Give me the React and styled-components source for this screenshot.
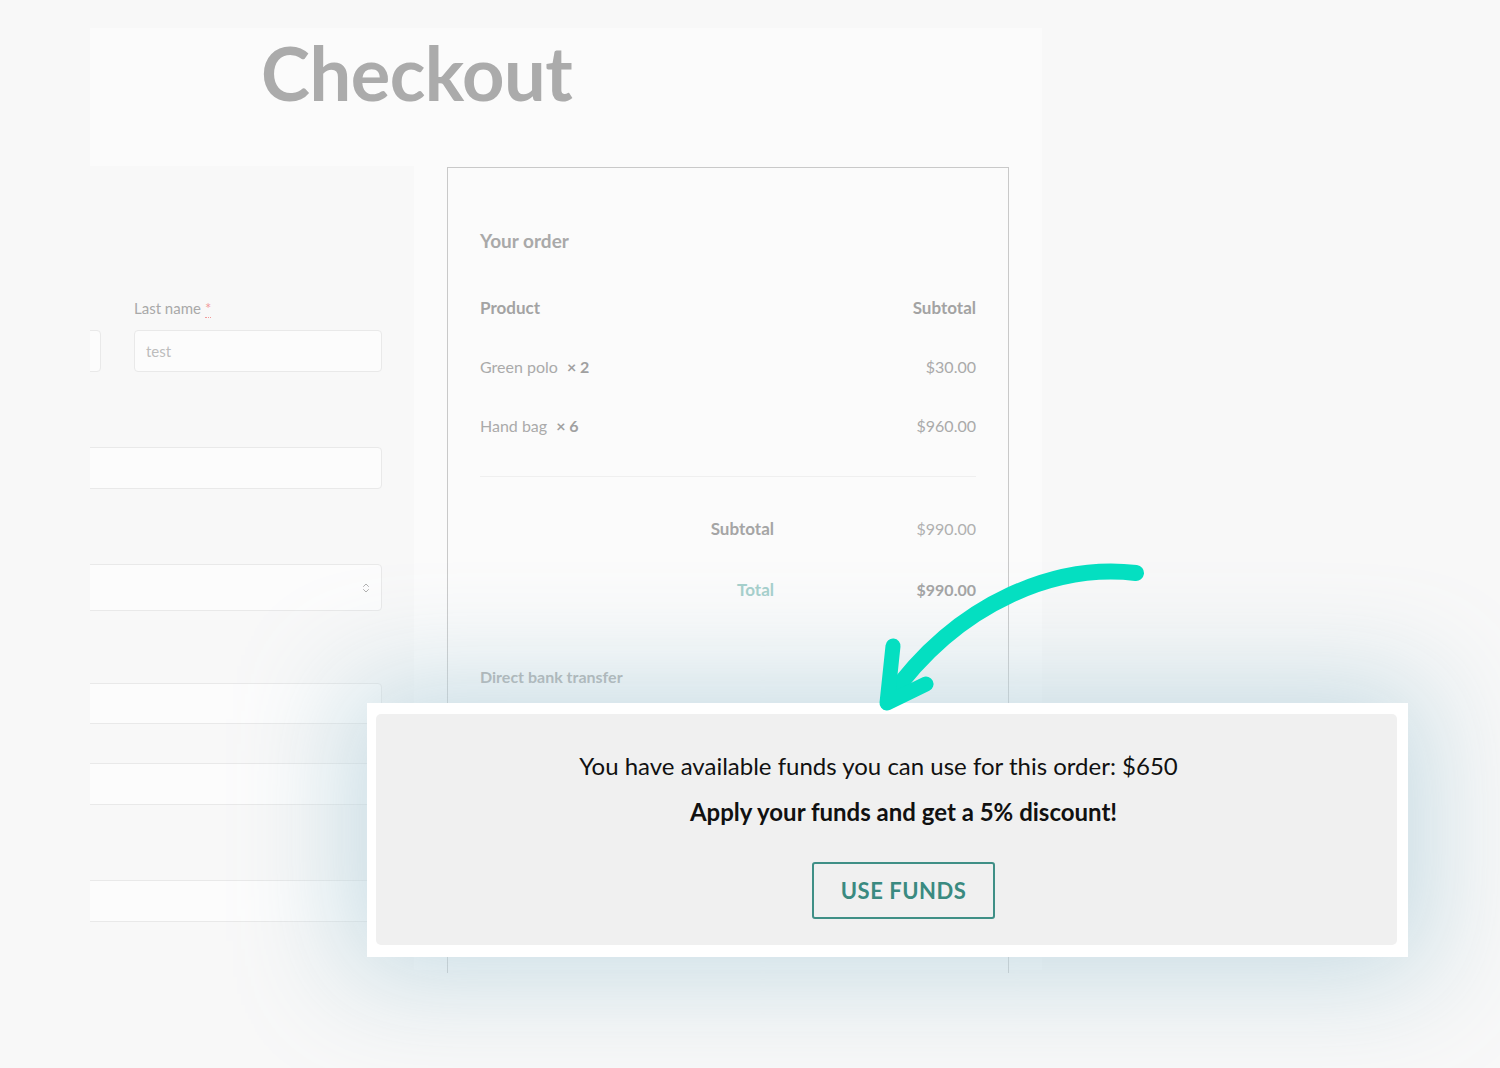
import styled, { createGlobalStyle } from "styled-components";
import { ChevronsUpDown } from "lucide-react";

const GlobalStyle = createGlobalStyle`
  * { box-sizing: border-box; }
  body {
    margin: 0;
    background: #f8f8f8;
    font-family: "Lato", "Open Sans", sans-serif;
  }
`;

const Page = styled.div`
  position: relative;
  width: 1500px;
  height: 1068px;
  overflow: hidden;
  padding: 28px 0 0 90px;
  background: #f8f8f8;
`;

const Panel = styled.div`
  width: 952px;
  height: 942px;
  background: #fbfbfb;
  display: flex;
  flex-direction: column;
`;

const Header = styled.div`
  flex-shrink: 0;
  height: 138px;
  padding: 5px 0 0 171px;
`;

const Title = styled.h1`
  margin: 0;
  font-size: 74px;
  line-height: 80px;
  font-weight: 700;
  color: #ababab;
  letter-spacing: -0.5px;
`;

const Body = styled.div`
  flex: 1;
  min-height: 0;
  display: flex;
  gap: 33px;
  align-items: flex-start;
`;

const LeftCol = styled.div`
  width: 324px;
  height: 100%;
  background: #f8f8f8;
  overflow: hidden;
`;

const Form = styled.div`
  width: 529px;
  margin-left: -237px;
  padding-top: 131px;
`;

const Row = styled.div`
  display: grid;
  grid-template-columns: 1fr 1fr;
  gap: 33px;
`;

const Field = styled.div`
  margin-top: ${(p) => p.$mt || 0}px;
`;

const Label = styled.div`
  height: 22px;
  margin-bottom: 11px;
  font-size: 15px;
  line-height: 22px;
  color: #a9a9a9;
`;

const Req = styled.abbr`
  color: #f19b9b;
  text-decoration: none;
  border-bottom: 1px dotted #f19b9b;
  margin-left: 4px;
`;

const Input = styled.div`
  height: ${(p) => p.$h || 42}px;
  border: 1px solid #e9e9e9;
  border-radius: 4px;
  background: #fcfcfc;
  display: flex;
  align-items: center;
  padding: 0 11px;
  font-size: 15px;
  color: #bdbdbd;
`;

const SelectIcon = styled(ChevronsUpDown)`
  margin-left: auto;
  margin-right: -2px;
  color: #9c9c9c;
`;

const OrderBox = styled.div`
  flex-shrink: 0;
  width: 562px;
  height: 806px;
  margin-top: 1px;
  border: 1px solid #c9c9c9;
  border-bottom: none;
  padding: 60px 32px 0 32px;
`;

const OrderTitle = styled.h3`
  margin: 0 0 24px;
  font-size: 19px;
  line-height: 26px;
  font-weight: 700;
  color: #a9a9a9;
`;

const Items = styled.div`
  border-bottom: 1px solid #efefef;
  padding-bottom: 21px;
  margin-bottom: 21px;
`;

const ItemRow = styled.div`
  height: 59px;
  display: flex;
  align-items: center;
  justify-content: space-between;
  font-size: ${(p) => (p.$head ? 17 : 16)}px;
  font-weight: ${(p) => (p.$head ? 700 : 400)};
  color: ${(p) => (p.$head ? "#a3a3a3" : "#aaaaaa")};
`;

const Qty = styled.b`
  margin-left: 9px;
  color: #a0a0a0;
`;

const TotalRow = styled.div`
  height: 61px;
  display: grid;
  grid-template-columns: 1fr 170px;
  align-items: center;
  font-size: 17px;
`;

const TotalLabel = styled.div`
  text-align: right;
  padding-right: 32px;
  font-weight: 700;
  color: ${(p) => (p.$accent ? "#a5cfcb" : "#a5a5a5")};
`;

const TotalValue = styled.div`
  text-align: right;
  font-size: 16px;
  font-weight: ${(p) => (p.$strong ? 700 : 400)};
  color: ${(p) => (p.$strong ? "#a3a3a3" : "#b0b0b0")};
`;

const Payment = styled.div`
  margin-top: 46px;
  font-size: 16px;
  line-height: 22px;
  font-weight: 700;
  color: #a8a8a8;
`;

const Popup = styled.div`
  position: absolute;
  left: 367px;
  top: 703px;
  width: 1041px;
  height: 254px;
  background: #ffffff;
  padding: 11px 11px 12px 9px;
  box-shadow: 0 0 110px 20px rgba(186, 212, 222, 0.8);
  z-index: 2;
`;

const PopupInner = styled.div`
  height: 100%;
  background: #f0f0f0;
  border-radius: 5px;
  padding: 36px 0 0 34px;
  display: flex;
  flex-direction: column;
  align-items: center;
  color: #111;
`;

const PopupText = styled.p`
  margin: 0 ${(p) => p.$shift || 0}px ${(p) => p.$mb || 0}px 0;
  font-size: 24px;
  line-height: 32px;
  font-weight: ${(p) => (p.$bold ? 700 : 400)};
`;

const UseButton = styled.button`
  width: 183px;
  height: 57px;
  border: 2px solid #3f8f86;
  border-radius: 3px;
  background: transparent;
  color: #3a8a80;
  font-family: inherit;
  font-size: 22px;
  font-weight: 700;
  letter-spacing: 0.5px;
  cursor: pointer;
`;

const Arrow = styled.svg`
  position: absolute;
  left: 860px;
  top: 550px;
  z-index: 3;
`;

export default function App() {
  return (
    <Page>
      <GlobalStyle />
      <Panel>
        <Header>
          <Title>Checkout</Title>
        </Header>
        <Body>
          <LeftCol>
            <Form>
              <Row>
                <Field>
                  <Label />
                  <Input />
                </Field>
                <Field>
                  <Label>
                    Last name<Req title="required">*</Req>
                  </Label>
                  <Input>test</Input>
                </Field>
              </Row>
              <Field $mt={42}>
                <Label />
                <Input />
              </Field>
              <Field $mt={42}>
                <Label />
                <Input $h={47}>
                  <SelectIcon size={12} strokeWidth={1.6} />
                </Input>
              </Field>
              <Field $mt={39}>
                <Label />
                <Input $h={41} />
              </Field>
              <Field $mt={39}>
                <Input />
              </Field>
              <Field $mt={42}>
                <Label />
                <Input />
              </Field>
            </Form>
          </LeftCol>
          <OrderBox>
            <OrderTitle>Your order</OrderTitle>
            <Items>
              <ItemRow $head>
                <span>Product</span>
                <span>Subtotal</span>
              </ItemRow>
              <ItemRow>
                <span>
                  Green polo<Qty>× 2</Qty>
                </span>
                <span>$30.00</span>
              </ItemRow>
              <ItemRow>
                <span>
                  Hand bag<Qty>× 6</Qty>
                </span>
                <span>$960.00</span>
              </ItemRow>
            </Items>
            <TotalRow>
              <TotalLabel>Subtotal</TotalLabel>
              <TotalValue>$990.00</TotalValue>
            </TotalRow>
            <TotalRow>
              <TotalLabel $accent>Total</TotalLabel>
              <TotalValue $strong>$990.00</TotalValue>
            </TotalRow>
            <Payment>Direct bank transfer</Payment>
          </OrderBox>
        </Body>
      </Panel>

      <Popup>
        <PopupInner>
          <PopupText $mb={14} $shift={50}>
            You have available funds you can use for this order: $650
          </PopupText>
          <PopupText $bold $mb={34}>
            Apply your funds and get a 5% discount!
          </PopupText>
          <UseButton>USE FUNDS</UseButton>
        </PopupInner>
      </Popup>

      <Arrow width="300" height="180" viewBox="0 0 300 180">
        <g fill="none" stroke="#04dfc1" strokeLinecap="round" strokeLinejoin="round">
          <path d="M276 23 C 200 14, 100 48, 28 150" strokeWidth="16" />
          <path d="M33 96 L 27 153 L 66 134" strokeWidth="15" />
        </g>
      </Arrow>
    </Page>
  );
}
